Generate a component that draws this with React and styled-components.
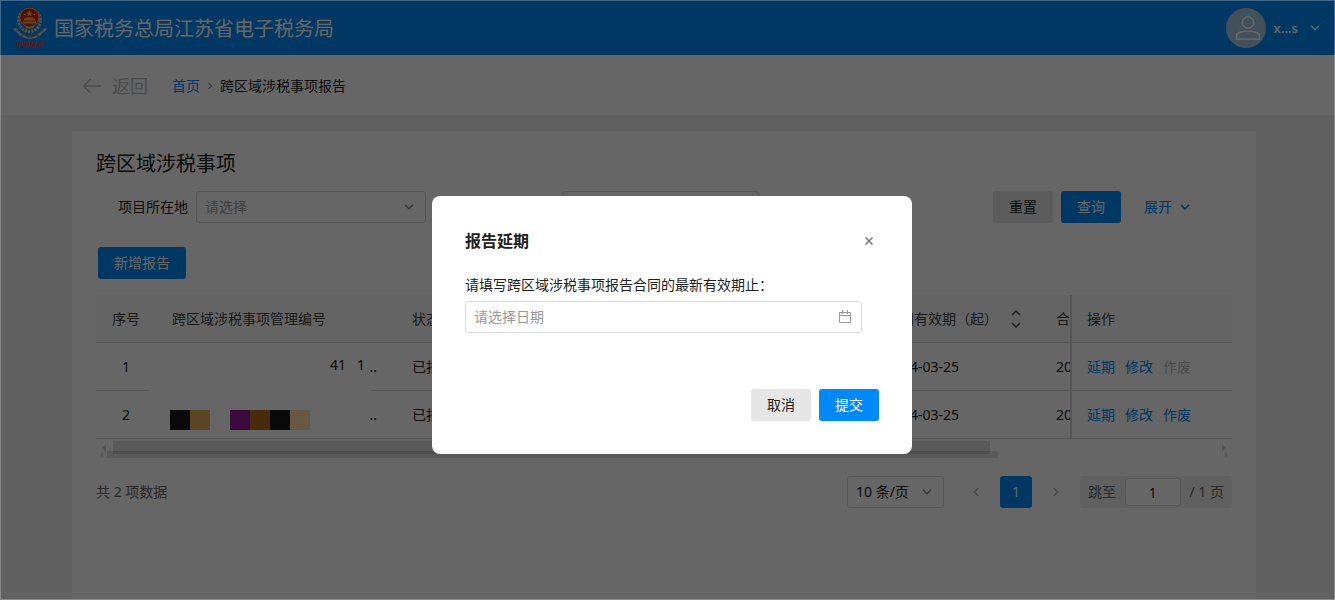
import React from "react";
import styled, { createGlobalStyle } from "styled-components";

const primary = "#0089f7";
const line = "#d6d6d6";

const GlobalStyle = createGlobalStyle`
  * { box-sizing: border-box; }
  body {
    margin: 0;
    background: #f3f3f3;
    color: #222;
    font: 14px/22px "Noto Sans", "Noto Sans CJK SC", sans-serif;
  }
  button, input, select { font: inherit; color: inherit; margin: 0; }
  button { cursor: pointer; }
  a { color: ${primary}; text-decoration: none; }
`;

const Page = styled.div`
  display: flex;
  flex-direction: column;
  min-height: 100vh;
`;

const Header = styled.header`
  display: flex;
  align-items: center;
  justify-content: space-between;
  height: 55px;
  padding: 0 15px 0 12px;
  background: ${primary};
  color: #fff;
`;

const Brand = styled.div`
  display: flex;
  align-items: center;
  gap: 6px;
`;

const BrandName = styled.h1`
  margin: 0;
  padding-top: 2px;
  font-size: 20px;
  line-height: 28px;
  font-weight: 400;
`;

const UserMenu = styled.button`
  display: flex;
  align-items: center;
  gap: 8px;
  padding: 0;
  border: 0;
  background: none;
  font-size: 13px;
  font-weight: 600;
  svg:last-child { margin-left: 4px; }
`;

const Avatar = styled.span`
  display: grid;
  place-items: center;
  width: 40px;
  height: 40px;
  border-radius: 50%;
  background: #a6c8e6;
`;

const NavBar = styled.nav`
  display: flex;
  align-items: center;
  height: 60px;
  padding: 2px 82px 0;
  background: #fff;
`;

const BackLink = styled.a`
  display: flex;
  align-items: center;
  gap: 10px;
  margin-right: 24px;
  color: #bdbdbd;
  font-size: 18px;
`;

const Crumbs = styled.div`
  display: flex;
  align-items: center;
  gap: 8px;
`;

const Card = styled.main`
  flex: 1;
  margin: 16px 79px 0 72px;
  padding: 19px 24px 24px;
  background: #fff;
`;

const CardTitle = styled.h2`
  margin: 0 0 13px;
  font-size: 20px;
  line-height: 28px;
  font-weight: 400;
`;

const FilterRow = styled.form`
  display: flex;
  align-items: center;
  gap: 8px;
  padding-right: 42px;
  margin-bottom: 24px;
`;

const FilterLabel = styled.label`
  width: ${(p) => p.$width}px;
  text-align: right;
`;

const SelectBox = styled.span`
  display: grid;
  align-items: center;
  width: ${(p) => p.$width}px;
  height: 32px;
  border: 1px solid ${line};
  border-radius: 3px;
  color: ${(p) => (p.$muted ? "#a0a0a0" : "#222")};
  > * { grid-area: 1 / 1; }
  > svg { justify-self: end; margin-right: 11px; pointer-events: none; }
`;

const Select = styled.select`
  appearance: none;
  width: 100%;
  height: 30px;
  padding: 0 8px;
  border: 0;
  background: none;
  outline: none;
`;

const Actions = styled.div`
  display: flex;
  align-items: center;
  gap: 8px;
  margin-left: auto;
`;

const Button = styled.button`
  height: 32px;
  padding: 0 16px;
  border: 0;
  border-radius: 3px;
  background: ${(p) => (p.$primary ? primary : "#e6e6e6")};
  color: ${(p) => (p.$primary ? "#fff" : "#222")};
`;

const ExpandLink = styled.a`
  display: flex;
  align-items: center;
  gap: 8px;
  margin-left: 15px;
`;

const Toolbar = styled.div`
  display: flex;
  padding-left: 2px;
  margin-bottom: 16px;
`;

const TableScroll = styled.div`
  overflow: hidden;
`;

const Table = styled.table`
  width: 100%;
  table-layout: fixed;
  border-collapse: separate;
  border-spacing: 0;
  th, td {
    position: relative;
    height: 48px;
    padding: 0 16px;
    border-bottom: 1px solid ${line};
    font-weight: 400;
    text-align: left;
    white-space: nowrap;
  }
  th { background: #f9f9f9; color: #444; }
  th:first-child, td:first-child { padding: 0; text-align: center; }
  th:nth-child(5), td:nth-child(5) { padding-right: 0; overflow: hidden; }
  th:last-child, td:last-child {
    border-left: 2px solid ${line};
    padding: 0 15px;
  }
`;

const Col = styled.col`
  width: ${(p) => (p.$width ? p.$width + "px" : "auto")};
`;

const SortHead = styled.span`
  display: flex;
  align-items: center;
  justify-content: space-between;
  padding-right: 3px;
`;

const CodeTail = styled.span`
  display: block;
  padding: 1px 3px 0 0;
  text-align: right;
`;

const Hidden = styled.span`
  position: absolute;
  top: 8px;
  left: -6px;
  display: flex;
  align-items: center;
  justify-content: ${(p) => (p.$end ? "flex-end" : "flex-start")};
  gap: ${(p) => (p.$end ? "11px" : "0")};
  width: 220px;
  height: ${(p) => (p.$end ? 40 : 34)}px;
  padding: ${(p) => (p.$end ? "0 5px 12px" : "8px 20px 0")};
  background: #fff;
  z-index: 1;
`;

const Tile = styled.i`
  width: 20px;
  height: 20px;
  background: ${(p) => p.$color};
`;

const RowLinks = styled.span`
  display: flex;
  gap: 10px;
`;

const RowLink = styled.a`
  color: ${(p) => (p.$off ? "#bdbdbd" : primary)};
`;

const ScrollTracks = styled.div`
  height: 20px;
  padding-top: 2px;
`;

const Track = styled.div`
  display: flex;
  align-items: center;
  height: ${(p) => p.$height}px;
  margin: ${(p) => (p.$lower ? "-3px 4px 0" : "0 6px 0 6px")};
  color: #cfcfcf;
`;

const Thumb = styled.div`
  flex: 0 1 ${(p) => (p.$lower ? 79 : 78)}%;
  height: 100%;
  margin: 0 auto 0 ${(p) => (p.$lower ? 4 : 7)}px;
  background: rgba(0, 0, 0, 0.12);
`;

const Pagination = styled.div`
  display: flex;
  align-items: center;
  margin-top: 17px;
  color: #666;
`;

const Total = styled.span`
  margin-right: auto;
`;

const PageButton = styled.button`
  display: grid;
  place-items: center;
  width: ${(p) => (p.$current ? 32 : 24)}px;
  height: 32px;
  padding: 0;
  border: 0;
  border-radius: 3px;
  background: ${(p) => (p.$current ? primary : "none")};
  color: ${(p) => (p.$current ? "#fff" : "#b4b4b4")};
`;

const Pages = styled.div`
  display: flex;
  gap: 12px;
  margin: 0 12px 0 20px;
`;

const Jump = styled.label`
  display: flex;
  align-items: center;
  justify-content: space-between;
  width: 152px;
  height: 32px;
  padding: 0 8px;
  border-radius: 3px;
  background: #f0f0f0;
`;

const JumpInput = styled.input`
  width: 56px;
  height: 28px;
  border: 1px solid ${line};
  border-radius: 3px;
  background: #fff;
  color: #222;
  text-align: center;
`;

const Mask = styled.div`
  position: fixed;
  inset: 0;
  z-index: 10;
  display: flex;
  align-items: flex-start;
  justify-content: center;
  padding: 195px 0 0 9px;
  border: 1px solid rgba(255, 255, 255, 0.25);
  background: rgba(0, 0, 0, 0.6);
`;

const Dialog = styled.section`
  width: 480px;
  padding: 33px;
  border-radius: 8px;
  background: #fff;
`;

const DialogHead = styled.header`
  display: flex;
  align-items: center;
  justify-content: space-between;
  margin-bottom: 21px;
`;

const DialogTitle = styled.h3`
  margin: 0;
  font-size: 16px;
  line-height: 24px;
  font-weight: 600;
`;

const CloseButton = styled.button`
  display: grid;
  place-items: center;
  width: 20px;
  height: 20px;
  padding: 0;
  border: 0;
  background: none;
  color: #777;
`;

const DateLabel = styled.label`
  display: block;
  margin-bottom: 5px;
`;

const DateBox = styled.div`
  display: flex;
  align-items: center;
  height: 32px;
  margin-right: 17px;
  padding: 0 9px 0 8px;
  border: 1px solid #dcdcdc;
  border-radius: 3px;
  color: #999;
`;

const DateInput = styled.input`
  flex: 1;
  min-width: 0;
  padding: 0;
  border: 0;
  outline: none;
  background: none;
  &::placeholder { color: #999; opacity: 1; }
`;

const DialogFoot = styled.footer`
  display: flex;
  justify-content: flex-end;
  gap: 8px;
  margin-top: 56px;
`;

const chevrons = {
  down: [10, 6, "M1 0.8 5 4.8 9 0.8"],
  left: [6, 10, "M5.2 1 1.2 5 5.2 9"],
  right: [6, 10, "M0.8 1 4.8 5 0.8 9"],
  crumb: [4, 8, "M0.6 1 3.4 4 0.6 7"],
};

function Chevron({ dir = "down", color = "currentColor", weight = 1.3 }) {
  const [w, h, d] = chevrons[dir];
  return (
    <svg width={w} height={h} viewBox={`0 0 ${w} ${h}`} fill="none" stroke={color} strokeWidth={weight} aria-hidden="true">
      <path d={d} />
    </svg>
  );
}

function Arrow({ right, size }) {
  return (
    <svg width={size / 2} height={size} viewBox="0 0 4 8" fill="currentColor" aria-hidden="true">
      <path d={right ? "M0 0 4 4 0 8z" : "M4 0 0 4 4 8z"} />
    </svg>
  );
}

function Emblem() {
  return (
    <svg width="36" height="44" viewBox="0 0 36 44" aria-hidden="true">
      <path d="M1 22c5 0 6 3 9 6 3 2 5 3 8 3s5-1 8-3c3-3 4-6 9-6-1 3-3 4-5 5 0 2-3 3-5 4-1 1-4 2-7 2-3 0-6-1-7-2-2-1-5-2-5-4-2-1-4-2-5-5z" fill="#c9d3da" />
      <path d="M4 24c5 1 8 7 14 7s9-6 14-7M9 30l5-2M27 30l-5-2M15 33l3-4 3 4" fill="none" stroke="#6f8290" strokeWidth="1" />
      <circle cx="17.500" cy="14.500" r="11" fill="none" stroke="#d9cda8" strokeWidth="3" strokeDasharray="2.2 1.1" />
      <circle cx="17.500" cy="11.500" r="9.500" fill="#e3201b" stroke="#e8a53c" strokeWidth="1" />
      <path d="M17.500 4.500l.9 2 2.100.2-1.600 1.400.5 2.100-1.900-1.100-1.900 1.100.5-2.100-1.600-1.400 2.100-.2z" fill="#ffd24a" />
      <path d="M12 14.500h11v-2h-2v-1h-7v1h-2zM11 15.500h13v2H11zM13 19.500q4.500 3 9 0l-1 3h-7z" fill="#f5b53c" />
      <circle cx="12.500" cy="8.500" r=".8" fill="#ffd24a" />
      <circle cx="22.500" cy="8.500" r=".8" fill="#ffd24a" />
      <text x="3" y="41" fontSize="7" fontWeight="700" fontStyle="italic" fill="#e8402f">中国税务</text>
    </svg>
  );
}

function Person() {
  return (
    <svg width="26" height="26" viewBox="0 0 26 26" fill="none" stroke="#fff" strokeWidth="1.6" aria-hidden="true">
      <circle cx="13" cy="7.500" r="5.700" />
      <path d="M1.500 24.200v-3.500c0-3 6-4.500 11.500-4.500s11.500 1.500 11.500 4.500v3.500z" />
    </svg>
  );
}

const rows = [
  { id: 1, canVoid: false },
  { id: 2, canVoid: true },
];
const tiles = ["#191919", "#e6aa62", "transparent", "#911996", "#b4691e", "#191919", "#ffe1a5"];

export default function App() {
  return (
    <>
      <GlobalStyle />
      <Page>
        <Header>
          <Brand>
            <Emblem />
            <BrandName>国家税务总局江苏省电子税务局</BrandName>
          </Brand>
          <UserMenu type="button">
            <Avatar><Person /></Avatar>
            x...s
            <Chevron weight={1.4} />
          </UserMenu>
        </Header>

        <NavBar>
          <BackLink href="#back">
            <svg width="20" height="16" viewBox="0 0 20 16" fill="none" stroke="currentColor" strokeWidth="1.500" aria-hidden="true">
              <path d="M19 8H2M8.500 1.300 1.800 8l6.700 6.700" />
            </svg>
            返回
          </BackLink>
          <Crumbs>
            <a href="#home">首页</a>
            <Chevron dir="crumb" color="#888" weight={1.1} />
            <span>跨区域涉税事项报告</span>
          </Crumbs>
        </NavBar>

        <Card>
          <CardTitle>跨区域涉税事项</CardTitle>
          <FilterRow>
            <FilterLabel $width={92} htmlFor="place">项目所在地</FilterLabel>
            <SelectBox $width={230} $muted>
              <Select id="place"><option>请选择</option></Select>
              <Chevron color="#888" />
            </SelectBox>
            <FilterLabel $width={120} htmlFor="state" />
            <SelectBox $width={197} $muted>
              <Select id="state" aria-label="状态" />
            </SelectBox>
            <Actions>
              <Button type="button">重置</Button>
              <Button type="button" $primary>查询</Button>
              <ExpandLink href="#expand">展开<Chevron weight={1.6} /></ExpandLink>
            </Actions>
          </FilterRow>

          <Toolbar>
            <Button type="button" $primary>新增报告</Button>
          </Toolbar>

          <TableScroll>
            <Table>
              <colgroup>
                <Col $width={60} />
                <Col $width={240} />
                <Col />
                <Col $width={170} />
                <Col $width={30} />
                <Col $width={162} />
              </colgroup>
              <thead>
                <tr>
                  <th>序号</th>
                  <th>跨区域涉税事项管理编号</th>
                  <th>状态</th>
                  <th>
                    <SortHead>
                      合同有效期（起）
                      <svg width="10" height="18" viewBox="0 0 10 18" fill="none" stroke="#444" strokeWidth="1.400" aria-hidden="true">
                        <path d="M1 5 5 1l4 4M1 13l4 4 4-4" />
                      </svg>
                    </SortHead>
                  </th>
                  <th>合</th>
                  <th>操作</th>
                </tr>
              </thead>
              <tbody>
                {rows.map((row) => (
                  <tr key={row.id}>
                    <td>{row.id}</td>
                    <td>
                      {row.canVoid ? (
                        <Hidden>{tiles.map((c, i) => <Tile key={i} $color={c} />)}</Hidden>
                      ) : (
                        <Hidden $end><span>41</span><span>1</span></Hidden>
                      )}
                      <CodeTail>..</CodeTail>
                    </td>
                    <td>已报告</td>
                    <td>2024-03-25</td>
                    <td>20</td>
                    <td>
                      <RowLinks>
                        <RowLink href="#extend">延期</RowLink>
                        <RowLink href="#edit">修改</RowLink>
                        <RowLink href="#void" $off={!row.canVoid}>作废</RowLink>
                      </RowLinks>
                    </td>
                  </tr>
                ))}
              </tbody>
            </Table>
          </TableScroll>
          <ScrollTracks>
            <Track $height={13}><Arrow size={8} /><Thumb /><Arrow right size={8} /></Track>
            <Track $height={7} $lower><Arrow size={6} /><Thumb $lower /><Arrow right size={6} /></Track>
          </ScrollTracks>

          <Pagination>
            <Total>共 2 项数据</Total>
            <SelectBox $width={97}>
              <Select aria-label="每页条数"><option>10 条/页</option></Select>
              <Chevron color="#888" />
            </SelectBox>
            <Pages>
              <PageButton type="button" aria-label="上一页"><Chevron dir="left" /></PageButton>
              <PageButton type="button" $current>1</PageButton>
              <PageButton type="button" aria-label="下一页"><Chevron dir="right" /></PageButton>
            </Pages>
            <Jump>
              跳至
              <JumpInput type="text" defaultValue="1" />
              / 1 页
            </Jump>
          </Pagination>
        </Card>
      </Page>

      <Mask>
        <Dialog role="dialog" aria-modal="true" aria-labelledby="dialog-title">
          <DialogHead>
            <DialogTitle id="dialog-title">报告延期</DialogTitle>
            <CloseButton type="button" aria-label="关闭">
              <svg width="8" height="8" viewBox="0 0 8 8" stroke="currentColor" strokeWidth="1.500" aria-hidden="true">
                <path d="M.5.5l7 7M7.500.5l-7 7" />
              </svg>
            </CloseButton>
          </DialogHead>
          <DateLabel htmlFor="date">请填写跨区域涉税事项报告合同的最新有效期止：</DateLabel>
          <DateBox>
            <DateInput id="date" type="text" placeholder="请选择日期" />
            <svg width="14" height="14" viewBox="0 0 14 14" fill="none" stroke="currentColor" aria-hidden="true">
              <path d="M1.500 2.500h11v10h-11zM1.500 5.500h11M4.500 0v4M9.500 0v4" />
            </svg>
          </DateBox>
          <DialogFoot>
            <Button type="button">取消</Button>
            <Button type="button" $primary>提交</Button>
          </DialogFoot>
        </Dialog>
      </Mask>
    </>
  );
}
